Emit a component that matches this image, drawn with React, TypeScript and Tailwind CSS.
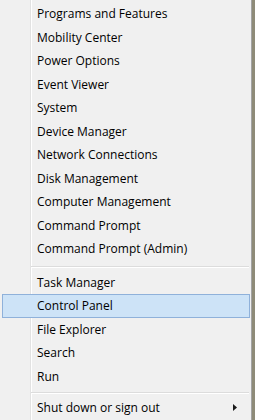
import React from 'react';

const topItems = [
  'Programs and Features',
  'Mobility Center',
  'Power Options',
  'Event Viewer',
  'System',
  'Device Manager',
  'Network Connections',
  'Disk Management',
  'Computer Management',
  'Command Prompt',
  'Command Prompt (Admin)',
];

const midItems = ['Task Manager', 'Control Panel', 'File Explorer', 'Search', 'Run'];

const font = { fontFamily: '"Open Sans", "Noto Sans", sans-serif' };

function Item({ label, active, submenu }: { label: string; active?: boolean; submenu?: boolean }) {
  return (
    <div
      className={`relative flex h-[23.5px] items-center pr-3 text-[12px] text-black ${
        active ? 'ml-[2px] mr-[1px] border border-[#8fb1da] bg-[#cde3f7] pl-[34px]' : 'pl-[37px]'
      }`}
    >
      <span className="pt-[1px] leading-none">{label}</span>
      {submenu && (
        <svg className="absolute right-[14px] top-[8px]" width="4" height="7" viewBox="0 0 4 7">
          <path d="M0 0 L4 3.5 L0 7 Z" fill="#1a1a1a" />
        </svg>
      )}
    </div>
  );
}

function Separator() {
  return (
    <div className="ml-[31px] mr-[2px] flex flex-col">
      <div className="h-px bg-[#dcdcdc]" />
      <div className="h-px bg-white" />
    </div>
  );
}

export default function App() {
  return (
    <div className="flex h-[420px] w-[255px] bg-[#8e8b78]" style={font}>
      <div className="relative h-full w-[252px] border-r border-[#a3a3a3] bg-[#f0f0f0] pt-[2px]">
        {/* gutter line */}
        <div className="absolute bottom-0 left-[30px] top-0 w-px bg-[#e2e2e2]" />
        <div className="absolute bottom-0 left-[31px] top-0 w-px bg-white" />
        <div className="relative">
          {topItems.map((t) => (
            <Item key={t} label={t} />
          ))}
          <div className="h-[5px]" />
          <Separator />
          <div className="h-[3px]" />
          {midItems.map((t) => (
            <Item key={t} label={t} active={t === 'Control Panel'} />
          ))}
          <div className="h-[4px]" />
          <Separator />
          <div className="h-[1.5px]" />
          <Item label="Shut down or sign out" submenu />
        </div>
      </div>
    </div>
  );
}
